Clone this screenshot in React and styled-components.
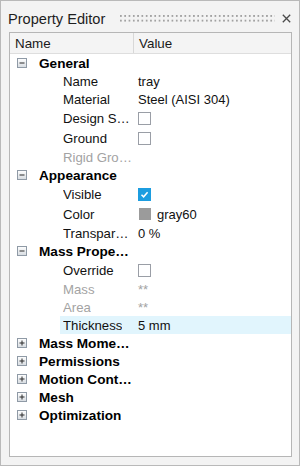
import React from "react";
import styled, { createGlobalStyle } from "styled-components";

const GlobalStyle = createGlobalStyle`
  html, body { margin: 0; padding: 0; background: #f3f3f3; }
  body { font-family: "Liberation Sans", Arial, sans-serif; }
  * { box-sizing: border-box; }
`;

const Frame = styled.div`
  width: 300px;
  height: 466px;
  border: 1px solid #b9b9b9;
  background: #f3f3f3;
  display: flex;
  flex-direction: column;
`;

const TitleBar = styled.div`
  height: 31px;
  display: flex;
  align-items: center;
  padding: 4px 0 0 7px;
`;

const Title = styled.div`
  font-size: 14.6px;
  color: #1e1e1e;
  white-space: nowrap;
`;

const Grip = styled.div`
  flex: 1;
  height: 8px;
  margin: 0 6px 0 15px;
  background-image: radial-gradient(circle at 1px 1px, #a2a2a2 0.9px, transparent 1.1px);
  background-size: 4.3px 4.7px;
`;

const CloseButton = styled.div`
  width: 10px;
  height: 10px;
  margin-right: 8px;
  display: flex;
  align-items: center;
  justify-content: center;
`;

const Panel = styled.div`
  flex: 1;
  margin: 0 7px 8px 8px;
  border: 1px solid #b6b6b6;
  background: #fff;
  display: flex;
  flex-direction: column;
`;

const Header = styled.div`
  display: grid;
  grid-template-columns: 124px 1fr;
  height: 21px;
  background: #f4f4f4;
  border-bottom: 1px solid #dedede;
  font-size: 13.4px;
  color: #1a1a1a;
`;

const HeaderCell = styled.div`
  display: flex;
  align-items: center;
  padding-left: ${(p) => p.$pad}px;
  border-right: ${(p) => (p.$divider ? "1px solid #d8d8d8" : "none")};
`;

const CategoryRow = styled.div`
  display: flex;
  align-items: center;
  height: 18px;
  padding-left: 7px;
`;

const CategoryName = styled.div`
  margin-left: 12px;
  max-width: 94px;
  font-size: 13.6px;
  font-weight: bold;
  color: #000;
  white-space: nowrap;
  overflow: hidden;
  text-overflow: ellipsis;
`;

const ItemRow = styled.div`
  display: grid;
  grid-template-columns: 50px 74px 1fr;
  height: ${(p) => (p.$tall ? 20 : 18)}px;
`;

const LabelCell = styled.div`
  grid-column: 2;
  display: flex;
  align-items: center;
  padding: 0 2px 0 3px;
  background: ${(p) => (p.$selected ? "#e1f5fd" : "transparent")};
  font-size: 13.2px;
  color: ${(p) => (p.$disabled ? "#a3a3a3" : "#111")};
  min-width: 0;
`;

const LabelText = styled.span`
  white-space: nowrap;
  overflow: hidden;
  text-overflow: ellipsis;
`;

const ValueCell = styled.div`
  display: flex;
  align-items: center;
  gap: 6px;
  padding-left: 4px;
  background: ${(p) => (p.$selected ? "#e1f5fd" : "transparent")};
  font-size: 13px;
  color: ${(p) => (p.$disabled ? "#a3a3a3" : "#111")};
  white-space: nowrap;
`;

const Checkbox = styled.span`
  width: 13px;
  height: 13px;
  border: 1px solid ${(p) => (p.$checked ? "#1c9de0" : "#9a9ea6")};
  background: ${(p) => (p.$checked ? "#1c9de0" : "#fff")};
  display: flex;
  align-items: center;
  justify-content: center;
`;

const Swatch = styled.span`
  width: 12px;
  height: 12px;
  margin-left: 1px;
  background: ${(p) => p.$color};
`;

function ExpandIcon({ open }) {
  return (
    <svg width="10" height="10" viewBox="0 0 10 10">
      <defs>
        <linearGradient id={open ? "gm" : "gp"} x1="0" y1="0" x2="0" y2="1">
          <stop offset="0" stopColor="#ffffff" />
          <stop offset="1" stopColor="#d6dbe0" />
        </linearGradient>
      </defs>
      <rect x="0.5" y="0.5" width="9" height="9" fill={`url(#${open ? "gm" : "gp"})`} stroke="#8f9aa6" />
      <line x1="2.5" y1="5" x2="7.5" y2="5" stroke="#2b2b2b" strokeWidth="1" />
      {!open && <line x1="5" y1="2.5" x2="5" y2="7.5" stroke="#2b2b2b" strokeWidth="1" />}
    </svg>
  );
}

function CheckMark() {
  return (
    <svg width="9" height="9" viewBox="0 0 9 9">
      <path d="M1.5 4.8 L3.6 6.8 L7.6 2.2" fill="none" stroke="#fff" strokeWidth="1.5" />
    </svg>
  );
}

const data = [
  { type: "cat", name: "General", open: true },
  { type: "item", label: "Name", value: "tray" },
  { type: "item", label: "Material", value: "Steel (AISI 304)" },
  { type: "item", label: "Design Space", check: false },
  { type: "item", label: "Ground", check: false },
  { type: "item", label: "Rigid Group", disabled: true },
  { type: "cat", name: "Appearance", open: true },
  { type: "item", label: "Visible", check: true },
  { type: "item", label: "Color", color: "#9b9b9b", value: "gray60", tall: true },
  { type: "item", label: "Transparency", value: "0 %" },
  { type: "cat", name: "Mass Properties", open: true },
  { type: "item", label: "Override", check: false },
  { type: "item", label: "Mass", value: "**", disabled: true },
  { type: "item", label: "Area", value: "**", disabled: true },
  { type: "item", label: "Thickness", value: "5 mm", selected: true },
  { type: "cat", name: "Mass Moments of Inertia", open: false },
  { type: "cat", name: "Permissions", open: false },
  { type: "cat", name: "Motion Contacts", open: false },
  { type: "cat", name: "Mesh", open: false },
  { type: "cat", name: "Optimization", open: false },
];

export default function App() {
  return (
    <>
      <GlobalStyle />
      <Frame>
        <TitleBar>
          <Title>Property Editor</Title>
          <Grip />
          <CloseButton>
            <svg width="9" height="9" viewBox="0 0 9 9">
              <path d="M0.8 0.8 L8.2 8.2 M8.2 0.8 L0.8 8.2" stroke="#4a4a4a" strokeWidth="1.3" />
            </svg>
          </CloseButton>
        </TitleBar>
        <Panel>
          <Header>
            <HeaderCell $pad={5} $divider>Name</HeaderCell>
            <HeaderCell $pad={5}>Value</HeaderCell>
          </Header>
          {data.map((r, i) =>
            r.type === "cat" ? (
              <CategoryRow key={i}>
                <ExpandIcon open={r.open} />
                <CategoryName>{r.name}</CategoryName>
              </CategoryRow>
            ) : (
              <ItemRow key={i} $tall={r.tall || r.check !== undefined}>
                <LabelCell $selected={r.selected} $disabled={r.disabled}>
                  <LabelText>{r.label}</LabelText>
                </LabelCell>
                <ValueCell $selected={r.selected} $disabled={r.disabled}>
                  {r.check !== undefined && (
                    <Checkbox $checked={r.check}>{r.check && <CheckMark />}</Checkbox>
                  )}
                  {r.color && <Swatch $color={r.color} />}
                  {r.value}
                </ValueCell>
              </ItemRow>
            )
          )}
        </Panel>
      </Frame>
    </>
  );
}
